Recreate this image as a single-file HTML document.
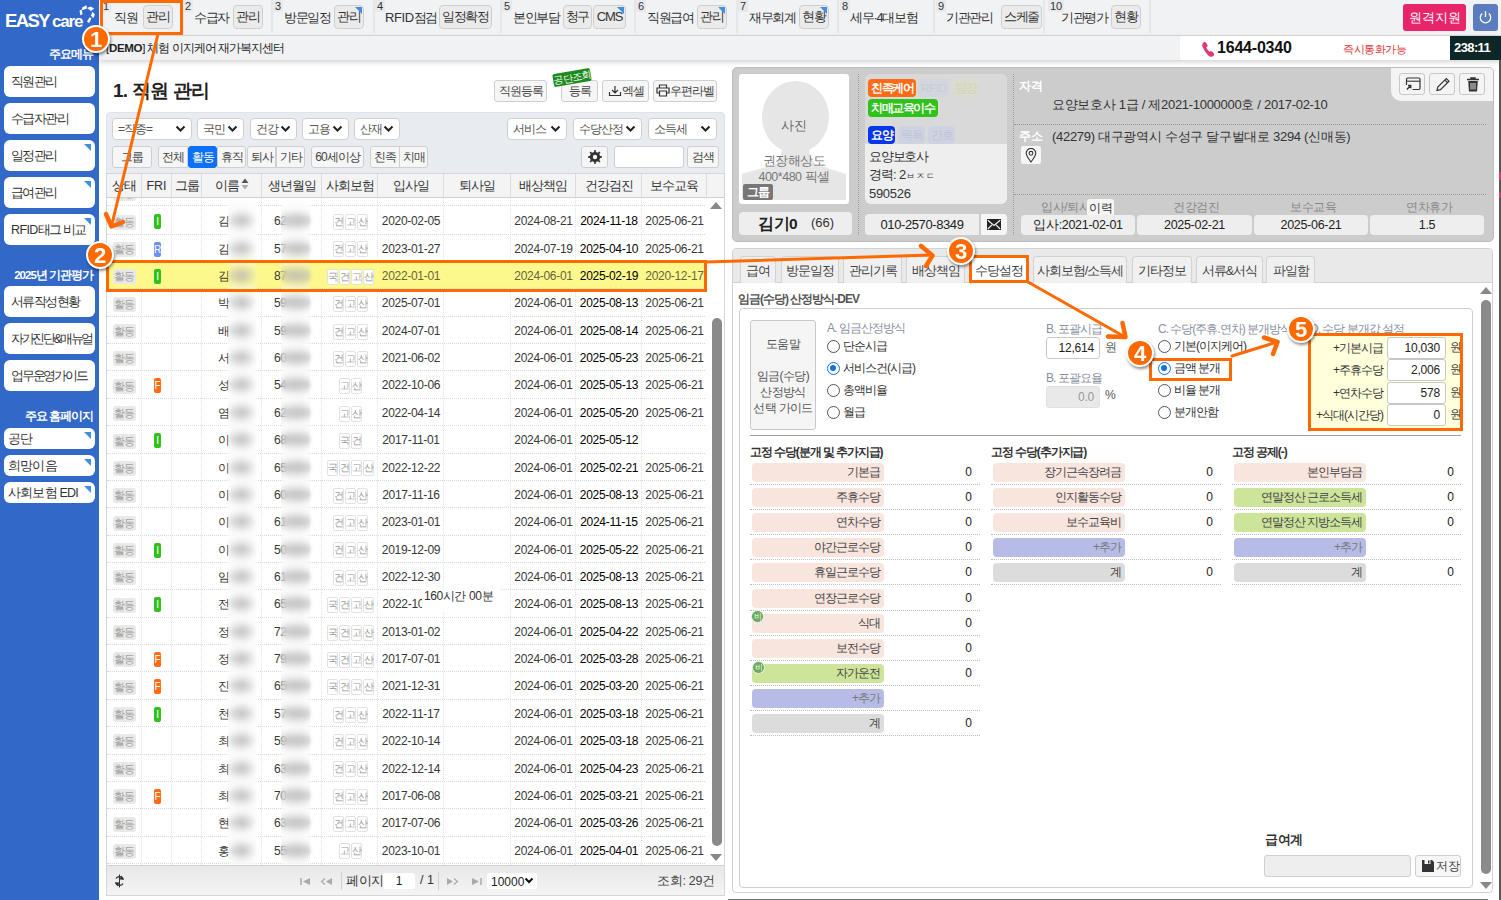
<!DOCTYPE html>
<html><head><meta charset="utf-8">
<style>
*{box-sizing:border-box;margin:0;padding:0}
html,body{width:1501px;height:900px;overflow:hidden;background:#fff}
body{position:relative;font-family:"Liberation Sans",sans-serif;font-size:12px;color:#333}
.a{position:absolute}
#sb{left:0;top:0;width:99px;height:900px;background:#3268c8}
.sbb{position:absolute;left:4px;width:91px;height:31px;background:#fff;border-radius:6px;font-size:12.5px;color:#333;padding-left:7px;line-height:33px;letter-spacing:-1.6px;white-space:nowrap}
.sbs{height:21px;line-height:22px;padding-left:4px;letter-spacing:-0.8px}
.tri{position:absolute;right:4px;top:4px;width:0;height:0;border-top:7px solid #3d8fe0;border-left:7px solid transparent}
.sbh{position:absolute;right:6px;color:#fff;font-weight:bold;font-size:11.5px;text-align:right;white-space:nowrap;letter-spacing:-1px}
#nav{left:99px;top:0;width:1402px;height:36px;background:#f1f2f4;border-bottom:1px solid #dcdcdc}
#bar2{left:99px;top:36px;width:1402px;height:24px;background:#f1f2f4;box-shadow:0 2px 5px rgba(0,0,0,0.18)}
.tab{position:absolute;top:0;height:35px}
.tsep{position:absolute;top:0;width:2px;height:33px;background:#e6e7ea}
.tnum{position:absolute;top:0;font-size:11px;color:#333;background:#e8e9ec;padding:0 2px;line-height:12px;height:12px}
.tlbl{position:absolute;top:9px;font-size:13px;color:#333;white-space:nowrap;letter-spacing:-1.3px}
.tbtn{position:absolute;top:5px;height:24px;background:#ebebeb;border:1px solid #cfcfcf;border-radius:4px;font-size:13px;color:#333;text-align:center;line-height:22px;white-space:nowrap;letter-spacing:-1.2px}

.btn{position:absolute;height:22px;background:#f6f6f6;border:1px solid #cfcfcf;border-radius:3px;font-size:12px;color:#444;text-align:center;line-height:20px;white-space:nowrap;letter-spacing:-1px}
.sel{position:absolute;top:118px;height:22px;background:#fff;border:1px solid #cfcfcf;border-radius:4px;font-size:12px;color:#555;line-height:20px;padding-left:5px;white-space:nowrap;letter-spacing:-1px}
.sel svg{position:absolute;right:5px;top:6px}
.fb{position:absolute;top:146px;height:22px;background:#f6f6f6;border:1px solid #cfcfcf;font-size:12px;color:#444;text-align:center;line-height:20px;white-space:nowrap;letter-spacing:-1px}

.th{position:absolute;top:0;height:24px;line-height:24px;text-align:center;font-size:12.5px;color:#333;border-right:1px solid #dcdcdc;white-space:nowrap;letter-spacing:-1px}
.tr{position:absolute;left:0;width:600px;height:27.4px;border-bottom:1px dotted #d9d9d9}
.td{position:absolute;top:1px;height:27px;line-height:27px;text-align:center;font-size:12px;letter-spacing:-0.3px;color:#383838;white-space:nowrap}
.st{display:inline-block;background:#e9e9e9;color:#a3a3a3;font-size:11px;line-height:15px;padding:0 1px;border-radius:3px;vertical-align:middle;letter-spacing:-0.6px}
.fr{position:absolute;left:12px;top:6px;width:7px;height:15px;border-radius:2px;color:#fff;font-size:10px;line-height:15px;text-align:center}
.bl{position:absolute;top:7px;height:11px;background:#a9a9a9;border-radius:6px;filter:blur(2.5px)}
.ins{display:inline-block;vertical-align:middle;line-height:0}
.ins i{display:inline-block;font-style:normal;width:11px;height:16px;border:1px solid #e2e2e2;border-radius:2px;font-size:10px;line-height:14px;color:#999;margin:0 0.5px;text-align:center;background:#fff;letter-spacing:0}

.bdg{position:absolute;height:18px;line-height:18px;font-size:11.5px;color:#fff;font-weight:bold;padding:0 3px;border-radius:4px;white-space:nowrap;letter-spacing:-1.4px}
.vbox{position:absolute;top:215px;height:20px;background:#eeeeee;border-radius:4px;font-size:12.5px;color:#222;text-align:center;line-height:20px;letter-spacing:-0.3px}
.lbl2{position:absolute;top:199px;font-size:12px;color:#888;white-space:nowrap;letter-spacing:-0.4px}
.ibtn{position:absolute;top:73px;width:26px;height:22px;background:#f4f4f4;border:1px solid #c8c8c8;border-radius:3px}
.ibtn svg{position:absolute;left:5px;top:3px}

.rt{position:absolute;top:256px;height:27px;background:#f0f0f0;border:1px solid #d2d2d2;border-bottom:none;border-radius:4px 4px 0 0;font-size:12.5px;color:#444;text-align:center;line-height:28px;white-space:nowrap;letter-spacing:-1px}
.rad{position:absolute;width:13px;height:13px;border:1px solid #555;border-radius:50%;background:#fff}
.rad.on{border:1.5px solid #1170e8}
.rad.on:after{content:"";position:absolute;left:2px;top:2px;width:6px;height:6px;border-radius:50%;background:#1170e8}
.rl{position:absolute;font-size:12px;color:#333;white-space:nowrap;letter-spacing:-1px}
.gl{position:absolute;font-size:12px;color:#8890a0;white-space:nowrap;letter-spacing:-1px}
.inp{position:absolute;height:22px;background:#fff;border:1px solid #c8c8c8;border-radius:3px;font-size:12px;color:#222;text-align:right;line-height:21px;padding-right:5px;letter-spacing:-0.2px}
.sh{position:absolute;top:444px;font-size:12px;font-weight:bold;color:#333;white-space:nowrap;letter-spacing:-1.1px}
.lb{position:absolute;height:19px;border-radius:4px;font-size:12px;color:#444;text-align:right;line-height:19px;padding-right:4px;white-space:nowrap;letter-spacing:-1px}
.lv{position:absolute;font-size:12px;color:#222;line-height:19px;text-align:right;width:30px}
.dl{position:absolute;height:0;border-top:1px dotted #bdbdbd}
.bi{position:absolute;width:13px;height:13px;border-radius:50%;background:#6aa85c;color:#fff;font-size:7.5px;line-height:12px;text-align:center;border:1px solid #eef5ea}

.obox{position:absolute;border:3px solid #ff6a00}
.circ{position:absolute;width:28px;height:28px;border-radius:50%;background:#ff6a00;border:2px solid #fff;box-shadow:1px 2px 3px rgba(0,0,0,0.45);color:#fff;font-weight:bold;font-size:22px;line-height:25px;text-align:center}
</style></head><body>
<div id="sb" class="a">
<div class="a" style="left:5px;top:11px;color:#fff;font-weight:bold;font-size:18.5px;letter-spacing:-1.6px;white-space:nowrap;line-height:20px">EASY<span style="margin-left:3px;font-size:17px;letter-spacing:-1.2px">care</span></div>
<svg class="a" style="left:77px;top:4px" width="20" height="21" viewBox="0 0 20 21"><g fill="#fff">
<path d="M2.5 6.8L4.6 5.2 5.6 10 3.5 11.5z"/><path d="M5.3 3.2L9.5 1.2 9.9 4.4 5.1 6.2z"/><path d="M10.2 4L13.5 2.5 17.2 4.6 14 6.9z"/><path d="M15.4 7.8L17.9 10.5 16.3 14.2 13.9 11.6z"/><path d="M12.6 13.2L14.5 14.5 12.1 18.9 10 17.6z"/></g></svg>
<div class="sbh" style="top:47px">주요메뉴</div>
<div class="sbb" style="top:66px">직원관리</div>
<div class="sbb" style="top:103px">수급자관리</div>
<div class="sbb" style="top:140px">일정관리<i class="tri"></i></div>
<div class="sbb" style="top:177px">급여관리<i class="tri"></i></div>
<div class="sbb" style="top:214px;letter-spacing:-1.5px"><span style="letter-spacing:-0.6px">RFID</span>태그 비교<i class="tri"></i></div>
<div class="sbh" style="top:268px">2025년 기관평가</div>
<div class="sbb" style="top:286px">서류작성현황</div>
<div class="sbb" style="top:323px;letter-spacing:-2.3px">자가진단&amp;매뉴얼</div>
<div class="sbb" style="top:360px;letter-spacing:-2.2px">업무운영가이드</div>
<div class="sbh" style="top:409px">주요 홈페이지</div>
<div class="sbb sbs" style="top:428px">공단<i class="tri"></i></div>
<div class="sbb sbs" style="top:455px">희망이음<i class="tri"></i></div>
<div class="sbb sbs" style="top:482px">사회보험 EDI<i class="tri"></i></div>
</div>
<div id="nav" class="a"></div>
<div class="a" style="left:0;top:0;width:1501px;height:36px">
<div class="tnum" style="left:101px">1</div>
<div class="tlbl" style="left:114px">직원</div>
<div class="tbtn" style="left:143px;width:30px">관리</div>
<div class="tsep" style="left:182px"></div>
<div class="tnum" style="left:183px">2</div>
<div class="tlbl" style="left:194px">수급자</div>
<div class="tbtn" style="left:233px;width:30px">관리</div>
<div class="tsep" style="left:271px"></div>
<div class="tnum" style="left:273px">3</div>
<div class="tlbl" style="left:284px">방문일정</div>
<div class="tbtn" style="left:334px;width:30px">관리<i class="tri" style="right:1px;top:1px"></i></div>
<div class="tsep" style="left:373px"></div>
<div class="tnum" style="left:375px">4</div>
<div class="tlbl" style="left:385px"><span style="letter-spacing:-0.4px">RFID</span>점검</div>
<div class="tbtn" style="left:439px;width:53px">일정확정</div>
<div class="tsep" style="left:500px"></div>
<div class="tnum" style="left:502px">5</div>
<div class="tlbl" style="left:513px">본인부담</div>
<div class="tbtn" style="left:563px;width:29px">청구</div>
<div class="tbtn" style="left:593px;width:33px">CMS<i class="tri" style="right:1px;top:1px"></i></div>
<div class="tsep" style="left:634px"></div>
<div class="tnum" style="left:636px">6</div>
<div class="tlbl" style="left:647px">직원급여</div>
<div class="tbtn" style="left:697px;width:30px">관리<i class="tri" style="right:1px;top:1px"></i></div>
<div class="tsep" style="left:736px"></div>
<div class="tnum" style="left:738px">7</div>
<div class="tlbl" style="left:749px">재무회계</div>
<div class="tbtn" style="left:799px;width:30px">현황<i class="tri" style="right:1px;top:1px"></i></div>
<div class="tsep" style="left:837px"></div>
<div class="tnum" style="left:840px">8</div>
<div class="tlbl" style="left:850px">세무·4대보험</div>
<div class="tsep" style="left:933px"></div>
<div class="tnum" style="left:936px">9</div>
<div class="tlbl" style="left:946px">기관관리</div>
<div class="tbtn" style="left:1001px;width:41px">스케줄</div>
<div class="tsep" style="left:1043px"></div>
<div class="tnum" style="left:1048px">10</div>
<div class="tlbl" style="left:1061px">기관평가</div>
<div class="tbtn" style="left:1111px;width:30px">현황</div>
<div class="tsep" style="left:1149px"></div>
<div class="a" style="left:1403px;top:4px;width:63px;height:27px;background:#e8246b;border-radius:3px;color:#fff;font-size:13px;text-align:center;line-height:27px">원격지원</div>
<div class="a" style="left:1473px;top:4px;width:25px;height:27px;background:#5b7dbf;border-radius:3px"><svg class="a" style="left:5px;top:6px" width="15" height="15" viewBox="0 0 15 15"><path d="M4.2 3.6A5.2 5.2 0 1 0 10.8 3.6" fill="none" stroke="#fff" stroke-width="1.3"/><path d="M7.5 1.2V7" stroke="#fff" stroke-width="1.3"/></svg></div>
</div>
<div id="bar2" class="a"></div>
<div class="a" style="left:106px;top:41px;font-size:11.5px;color:#222;white-space:nowrap;letter-spacing:-1px"><span style="letter-spacing:-0.3px">[<b>DEMO</b>]</span> 체험 이지케어 재가복지센터</div>
<div class="a" style="left:1180px;top:36px;width:275px;height:24px;background:#fff;border-radius:4px 0 0 4px"></div>
<svg class="a" style="left:1201px;top:41px" width="15" height="16" viewBox="0 0 15 16"><path d="M2.5 1.5c1-0.8 2-0.6 2.6 0.3l1.3 2.2c0.4 0.7 0.2 1.4-0.4 1.8l-0.8 0.5c0.6 1.8 1.8 3.4 3.4 4.5l0.8-0.5c0.6-0.4 1.3-0.3 1.8 0.3l1.6 2c0.6 0.8 0.4 1.8-0.5 2.4-1.5 1-3.4 0.8-5-0.6C5 12.3 2.6 8.8 1.4 5.3 0.9 3.8 1.3 2.4 2.5 1.5z" fill="#e0357a"/></svg>
<div class="a" style="left:1217px;top:39px;font-size:16px;font-weight:bold;color:#111;white-space:nowrap;letter-spacing:-0.2px">1644-0340</div>
<div class="a" style="left:1343px;top:42px;font-size:11px;color:#d33;white-space:nowrap;letter-spacing:-0.5px">즉시통화가능</div>
<div class="a" style="left:1450px;top:36px;width:51px;height:24px;background:#0d2626;color:#fff;font-size:13px;font-weight:bold;line-height:24px;padding-left:4px;letter-spacing:-0.6px">238:11</div>


<div class="a" style="left:113px;top:78px;font-size:19px;font-weight:bold;color:#222;white-space:nowrap;letter-spacing:-0.8px">1. 직원 관리</div>
<div class="btn" style="left:494px;top:80px;width:53px;height:22px">직원등록</div>
<div class="btn" style="left:561px;top:80px;width:37px;height:22px">등록</div>
<div class="a" style="left:553px;top:71px;width:38px;height:13px;background:#1e8a1e;color:#fff;font-size:10px;line-height:13px;text-align:center;transform:rotate(-10deg);border-radius:2px;letter-spacing:-0.8px">공단조회</div>
<div class="btn" style="left:602px;top:80px;width:47px;height:22px"><svg style="vertical-align:-2px" width="14" height="12" viewBox="0 0 14 12"><path d="M7 1v7M4 5l3 3 3-3M1.5 7v3.5h11V7" fill="none" stroke="#333" stroke-width="1.2"/></svg>엑셀</div>
<div class="btn" style="left:653px;top:80px;width:64px;height:22px"><svg style="vertical-align:-2px" width="14" height="13" viewBox="0 0 14 13"><path d="M3.5 4V1h7v3M3.5 9H1V4h12v5h-2.5M3.5 7h7v5h-7z" fill="none" stroke="#333" stroke-width="1.2"/></svg>우편라벨</div>
<div class="a" style="left:106px;top:112px;width:619px;height:62px;background:#e8ebef;border-radius:4px 4px 0 0;border:1px solid #dfe2e6"></div>
<div class="sel" style="left:112px;width:80px">=직종=<svg width="11" height="8" viewBox="0 0 11 8"><path d="M1.5 1.5L5.5 5.5 9.5 1.5" fill="none" stroke="#222" stroke-width="2"/></svg></div><div class="sel" style="left:197px;width:47px">국민<svg width="11" height="8" viewBox="0 0 11 8"><path d="M1.5 1.5L5.5 5.5 9.5 1.5" fill="none" stroke="#222" stroke-width="2"/></svg></div><div class="sel" style="left:250px;width:47px">건강<svg width="11" height="8" viewBox="0 0 11 8"><path d="M1.5 1.5L5.5 5.5 9.5 1.5" fill="none" stroke="#222" stroke-width="2"/></svg></div><div class="sel" style="left:302px;width:47px">고용<svg width="11" height="8" viewBox="0 0 11 8"><path d="M1.5 1.5L5.5 5.5 9.5 1.5" fill="none" stroke="#222" stroke-width="2"/></svg></div><div class="sel" style="left:354px;width:46px">산재<svg width="11" height="8" viewBox="0 0 11 8"><path d="M1.5 1.5L5.5 5.5 9.5 1.5" fill="none" stroke="#222" stroke-width="2"/></svg></div><div class="sel" style="left:507px;width:60px">서비스<svg width="11" height="8" viewBox="0 0 11 8"><path d="M1.5 1.5L5.5 5.5 9.5 1.5" fill="none" stroke="#222" stroke-width="2"/></svg></div><div class="sel" style="left:573px;width:69px">수당산정<svg width="11" height="8" viewBox="0 0 11 8"><path d="M1.5 1.5L5.5 5.5 9.5 1.5" fill="none" stroke="#222" stroke-width="2"/></svg></div><div class="sel" style="left:648px;width:69px">소득세<svg width="11" height="8" viewBox="0 0 11 8"><path d="M1.5 1.5L5.5 5.5 9.5 1.5" fill="none" stroke="#222" stroke-width="2"/></svg></div>
<div class="fb" style="left:112px;width:40px;border-radius:3px">그룹</div>
<div class="fb" style="left:158px;width:30px;border-radius:3px 0 0 3px">전체</div>
<div class="fb" style="left:188px;width:29px;background:#0b6ff7;border-color:#0b6ff7;color:#fff;border-radius:3px">활동</div>
<div class="fb" style="left:217px;width:29px;border-radius:0 3px 3px 0">휴직</div>
<div class="fb" style="left:247px;width:29px;border-radius:3px 0 0 3px">퇴사</div>
<div class="fb" style="left:276px;width:29px;border-radius:0 3px 3px 0">기타</div>
<div class="fb" style="left:311px;width:53px;border-radius:3px">60세이상</div>
<div class="fb" style="left:370px;width:30px;border-radius:3px 0 0 3px">친족</div>
<div class="fb" style="left:399px;width:29px;border-radius:0 3px 3px 0">치매</div>
<div class="fb" style="left:581px;width:27px;border-radius:3px"><svg style="position:absolute;left:5px;top:2px" width="16" height="16" viewBox="0 0 16 16"><path d="M13.12 7.11 L14.96 7.29 L14.96 8.71 L13.12 8.89 L12.25 10.99 L13.43 12.42 L12.42 13.43 L10.99 12.25 L8.89 13.12 L8.71 14.96 L7.29 14.96 L7.11 13.12 L5.01 12.25 L3.58 13.43 L2.57 12.42 L3.75 10.99 L2.88 8.89 L1.04 8.71 L1.04 7.29 L2.88 7.11 L3.75 5.01 L2.57 3.58 L3.58 2.57 L5.01 3.75 L7.11 2.88 L7.29 1.04 L8.71 1.04 L8.89 2.88 L10.99 3.75 L12.42 2.57 L13.43 3.58 L12.25 5.01Z" fill="#333"/><circle cx="8" cy="8" r="2.2" fill="#f6f6f6"/></svg></div>
<div class="a" style="left:614px;top:146px;width:70px;height:22px;background:#fff;border:1px solid #cfcfcf;border-radius:3px"></div>
<div class="fb" style="left:687px;width:32px;border-radius:3px">검색</div>


<div class="a" style="left:106px;top:173px;width:619px;height:723px;border:1px solid #d6d6d6;background:#fff"></div>
<div class="a" style="left:107px;top:174px;width:617px;height:24px;background:#f4f4f4;border-bottom:1px solid #cfcfcf"><div class="th" style="left:0px;width:35px">상태</div><div class="th" style="left:35px;width:30px;letter-spacing:0">FRI</div><div class="th" style="left:65px;width:30px">그룹</div><div class="th" style="left:95px;width:60px">이름<svg style="vertical-align:0px;margin-left:2px" width="8" height="12" viewBox="0 0 8 12"><path d="M4 0.5L7.5 5H0.5z" fill="#555"/><path d="M4 11.5L7.5 7H0.5z" fill="#aaa"/></svg></div><div class="th" style="left:155px;width:60px">생년월일</div><div class="th" style="left:215px;width:56px">사회보험</div><div class="th" style="left:271px;width:66px">입사일</div><div class="th" style="left:337px;width:67px">퇴사일</div><div class="th" style="left:404px;width:65px">배상책임</div><div class="th" style="left:469px;width:66px">건강검진</div><div class="th" style="left:535px;width:65px">보수교육</div></div>
<div class="a" style="left:107px;top:198px;width:599px;height:667px;overflow:hidden">
<div class="a" style="left:34px;top:0;width:0;height:667px;border-left:1px dotted #e3e3e3"></div><div class="a" style="left:64px;top:0;width:0;height:667px;border-left:1px dotted #e3e3e3"></div><div class="a" style="left:94px;top:0;width:0;height:667px;border-left:1px dotted #e3e3e3"></div><div class="a" style="left:154px;top:0;width:0;height:667px;border-left:1px dotted #e3e3e3"></div><div class="a" style="left:214px;top:0;width:0;height:667px;border-left:1px dotted #e3e3e3"></div><div class="a" style="left:270px;top:0;width:0;height:667px;border-left:1px dotted #e3e3e3"></div><div class="a" style="left:336px;top:0;width:0;height:667px;border-left:1px dotted #e3e3e3"></div><div class="a" style="left:403px;top:0;width:0;height:667px;border-left:1px dotted #e3e3e3"></div><div class="a" style="left:468px;top:0;width:0;height:667px;border-left:1px dotted #e3e3e3"></div><div class="a" style="left:534px;top:0;width:0;height:667px;border-left:1px dotted #e3e3e3"></div>
<div class="tr" style="top:-19px"><div class="td" style="left:0;width:35px"><span class="st">활동</span></div></div><div class="tr" style="top:9.30px;"><div class="td" style="left:0px;width:35px;"><span class="st">활동</span></div><div class="td" style="left:35px;width:30px;"><span class="fr" style="background:#2fc21b">I</span></div><div class="td" style="left:65px;width:30px;"></div><div class="td" style="left:95px;width:60px;letter-spacing:-0.5px"><span style="position:absolute;left:16px;top:0">김</span><span class="bl" style="left:30px;width:19px"></span></div><div class="td" style="left:155px;width:60px;"><span style="position:absolute;left:12px;top:0">62</span><span class="bl" style="left:23px;width:24px"></span></div><div class="td" style="left:215px;width:56px;"><span class="ins"><i>건</i><i>고</i><i>산</i></span></div><div class="td" style="left:271px;width:66px;">2020-02-05</div><div class="td" style="left:337px;width:67px;"></div><div class="td" style="left:404px;width:65px;">2024-08-21</div><div class="td" style="left:469px;width:66px;color:#000">2024-11-18</div><div class="td" style="left:535px;width:65px;">2025-06-21</div></div><div class="tr" style="top:36.66px;"><div class="td" style="left:0px;width:35px;"><span class="st">활동</span></div><div class="td" style="left:35px;width:30px;"><span class="fr" style="background:#6f8ff5">R</span></div><div class="td" style="left:65px;width:30px;"></div><div class="td" style="left:95px;width:60px;letter-spacing:-0.5px"><span style="position:absolute;left:16px;top:0">김</span><span class="bl" style="left:30px;width:19px"></span></div><div class="td" style="left:155px;width:60px;"><span style="position:absolute;left:12px;top:0">57</span><span class="bl" style="left:23px;width:24px"></span></div><div class="td" style="left:215px;width:56px;"><span class="ins"><i>건</i><i>고</i><i>산</i></span></div><div class="td" style="left:271px;width:66px;">2023-01-27</div><div class="td" style="left:337px;width:67px;"></div><div class="td" style="left:404px;width:65px;">2024-07-19</div><div class="td" style="left:469px;width:66px;color:#000">2025-04-10</div><div class="td" style="left:535px;width:65px;">2025-06-21</div></div><div class="tr" style="top:64.02px;background:#fdf88b;"><div class="td" style="left:0px;width:35px;"><span class="st">활동</span></div><div class="td" style="left:35px;width:30px;"><span class="fr" style="background:#2fc21b">I</span></div><div class="td" style="left:65px;width:30px;"></div><div class="td" style="left:95px;width:60px;letter-spacing:-0.5px"><span style="position:absolute;left:16px;top:0">김</span><span class="bl" style="left:30px;width:19px"></span></div><div class="td" style="left:155px;width:60px;"><span style="position:absolute;left:12px;top:0">87</span><span class="bl" style="left:23px;width:24px"></span></div><div class="td" style="left:215px;width:56px;"><span class="ins"><i>국</i><i>건</i><i>고</i><i>산</i></span></div><div class="td" style="left:271px;width:66px;"><span style="color:#6a6440">2022-01-01</span></div><div class="td" style="left:337px;width:67px;"></div><div class="td" style="left:404px;width:65px;"><span style="color:#6a6440">2024-06-01</span></div><div class="td" style="left:469px;width:66px;color:#000">2025-02-19</div><div class="td" style="left:535px;width:65px;"><span style="color:#6a6440">2020-12-17</span></div></div><div class="tr" style="top:91.38px;"><div class="td" style="left:0px;width:35px;"><span class="st">활동</span></div><div class="td" style="left:35px;width:30px;"></div><div class="td" style="left:65px;width:30px;"></div><div class="td" style="left:95px;width:60px;letter-spacing:-0.5px"><span style="position:absolute;left:16px;top:0">박</span><span class="bl" style="left:30px;width:19px"></span></div><div class="td" style="left:155px;width:60px;"><span style="position:absolute;left:12px;top:0">59</span><span class="bl" style="left:23px;width:24px"></span></div><div class="td" style="left:215px;width:56px;"><span class="ins"><i>건</i><i>고</i><i>산</i></span></div><div class="td" style="left:271px;width:66px;">2025-07-01</div><div class="td" style="left:337px;width:67px;"></div><div class="td" style="left:404px;width:65px;">2024-06-01</div><div class="td" style="left:469px;width:66px;color:#000">2025-08-13</div><div class="td" style="left:535px;width:65px;">2025-06-21</div></div><div class="tr" style="top:118.74px;"><div class="td" style="left:0px;width:35px;"><span class="st">활동</span></div><div class="td" style="left:35px;width:30px;"></div><div class="td" style="left:65px;width:30px;"></div><div class="td" style="left:95px;width:60px;letter-spacing:-0.5px"><span style="position:absolute;left:16px;top:0">배</span><span class="bl" style="left:30px;width:19px"></span></div><div class="td" style="left:155px;width:60px;"><span style="position:absolute;left:12px;top:0">59</span><span class="bl" style="left:23px;width:24px"></span></div><div class="td" style="left:215px;width:56px;"><span class="ins"><i>건</i><i>고</i><i>산</i></span></div><div class="td" style="left:271px;width:66px;">2024-07-01</div><div class="td" style="left:337px;width:67px;"></div><div class="td" style="left:404px;width:65px;">2024-06-01</div><div class="td" style="left:469px;width:66px;color:#000">2025-08-14</div><div class="td" style="left:535px;width:65px;">2025-06-21</div></div><div class="tr" style="top:146.10px;"><div class="td" style="left:0px;width:35px;"><span class="st">활동</span></div><div class="td" style="left:35px;width:30px;"></div><div class="td" style="left:65px;width:30px;"></div><div class="td" style="left:95px;width:60px;letter-spacing:-0.5px"><span style="position:absolute;left:16px;top:0">서</span><span class="bl" style="left:30px;width:19px"></span></div><div class="td" style="left:155px;width:60px;"><span style="position:absolute;left:12px;top:0">60</span><span class="bl" style="left:23px;width:24px"></span></div><div class="td" style="left:215px;width:56px;"><span class="ins"><i>건</i><i>고</i><i>산</i></span></div><div class="td" style="left:271px;width:66px;">2021-06-02</div><div class="td" style="left:337px;width:67px;"></div><div class="td" style="left:404px;width:65px;">2024-06-01</div><div class="td" style="left:469px;width:66px;color:#000">2025-05-23</div><div class="td" style="left:535px;width:65px;">2025-06-21</div></div><div class="tr" style="top:173.46px;"><div class="td" style="left:0px;width:35px;"><span class="st">활동</span></div><div class="td" style="left:35px;width:30px;"><span class="fr" style="background:#ff6a13">F</span></div><div class="td" style="left:65px;width:30px;"></div><div class="td" style="left:95px;width:60px;letter-spacing:-0.5px"><span style="position:absolute;left:16px;top:0">성</span><span class="bl" style="left:30px;width:19px"></span></div><div class="td" style="left:155px;width:60px;"><span style="position:absolute;left:12px;top:0">54</span><span class="bl" style="left:23px;width:24px"></span></div><div class="td" style="left:215px;width:56px;"><span class="ins"><i>고</i><i>산</i></span></div><div class="td" style="left:271px;width:66px;">2022-10-06</div><div class="td" style="left:337px;width:67px;"></div><div class="td" style="left:404px;width:65px;">2024-06-01</div><div class="td" style="left:469px;width:66px;color:#000">2025-05-13</div><div class="td" style="left:535px;width:65px;">2025-06-21</div></div><div class="tr" style="top:200.82px;"><div class="td" style="left:0px;width:35px;"><span class="st">활동</span></div><div class="td" style="left:35px;width:30px;"></div><div class="td" style="left:65px;width:30px;"></div><div class="td" style="left:95px;width:60px;letter-spacing:-0.5px"><span style="position:absolute;left:16px;top:0">염</span><span class="bl" style="left:30px;width:19px"></span></div><div class="td" style="left:155px;width:60px;"><span style="position:absolute;left:12px;top:0">62</span><span class="bl" style="left:23px;width:24px"></span></div><div class="td" style="left:215px;width:56px;"><span class="ins"><i>고</i><i>산</i></span></div><div class="td" style="left:271px;width:66px;">2022-04-14</div><div class="td" style="left:337px;width:67px;"></div><div class="td" style="left:404px;width:65px;">2024-06-01</div><div class="td" style="left:469px;width:66px;color:#000">2025-05-20</div><div class="td" style="left:535px;width:65px;">2025-06-21</div></div><div class="tr" style="top:228.18px;"><div class="td" style="left:0px;width:35px;"><span class="st">활동</span></div><div class="td" style="left:35px;width:30px;"><span class="fr" style="background:#2fc21b">I</span></div><div class="td" style="left:65px;width:30px;"></div><div class="td" style="left:95px;width:60px;letter-spacing:-0.5px"><span style="position:absolute;left:16px;top:0">이</span><span class="bl" style="left:30px;width:19px"></span></div><div class="td" style="left:155px;width:60px;"><span style="position:absolute;left:12px;top:0">68</span><span class="bl" style="left:23px;width:24px"></span></div><div class="td" style="left:215px;width:56px;"><span class="ins"><i>국</i><i>건</i></span></div><div class="td" style="left:271px;width:66px;">2017-11-01</div><div class="td" style="left:337px;width:67px;"></div><div class="td" style="left:404px;width:65px;">2024-06-01</div><div class="td" style="left:469px;width:66px;color:#000">2025-05-12</div><div class="td" style="left:535px;width:65px;"></div></div><div class="tr" style="top:255.54px;"><div class="td" style="left:0px;width:35px;"><span class="st">활동</span></div><div class="td" style="left:35px;width:30px;"></div><div class="td" style="left:65px;width:30px;"></div><div class="td" style="left:95px;width:60px;letter-spacing:-0.5px"><span style="position:absolute;left:16px;top:0">이</span><span class="bl" style="left:30px;width:19px"></span></div><div class="td" style="left:155px;width:60px;"><span style="position:absolute;left:12px;top:0">65</span><span class="bl" style="left:23px;width:24px"></span></div><div class="td" style="left:215px;width:56px;"><span class="ins"><i>국</i><i>건</i><i>고</i><i>산</i></span></div><div class="td" style="left:271px;width:66px;">2022-12-22</div><div class="td" style="left:337px;width:67px;"></div><div class="td" style="left:404px;width:65px;">2024-06-01</div><div class="td" style="left:469px;width:66px;color:#000">2025-02-21</div><div class="td" style="left:535px;width:65px;">2025-06-21</div></div><div class="tr" style="top:282.90px;"><div class="td" style="left:0px;width:35px;"><span class="st">활동</span></div><div class="td" style="left:35px;width:30px;"></div><div class="td" style="left:65px;width:30px;"></div><div class="td" style="left:95px;width:60px;letter-spacing:-0.5px"><span style="position:absolute;left:16px;top:0">이</span><span class="bl" style="left:30px;width:19px"></span></div><div class="td" style="left:155px;width:60px;"><span style="position:absolute;left:12px;top:0">60</span><span class="bl" style="left:23px;width:24px"></span></div><div class="td" style="left:215px;width:56px;"><span class="ins"><i>건</i><i>고</i><i>산</i></span></div><div class="td" style="left:271px;width:66px;">2017-11-16</div><div class="td" style="left:337px;width:67px;"></div><div class="td" style="left:404px;width:65px;">2024-06-01</div><div class="td" style="left:469px;width:66px;color:#000">2025-08-13</div><div class="td" style="left:535px;width:65px;">2025-06-21</div></div><div class="tr" style="top:310.26px;"><div class="td" style="left:0px;width:35px;"><span class="st">활동</span></div><div class="td" style="left:35px;width:30px;"></div><div class="td" style="left:65px;width:30px;"></div><div class="td" style="left:95px;width:60px;letter-spacing:-0.5px"><span style="position:absolute;left:16px;top:0">이</span><span class="bl" style="left:30px;width:19px"></span></div><div class="td" style="left:155px;width:60px;"><span style="position:absolute;left:12px;top:0">61</span><span class="bl" style="left:23px;width:24px"></span></div><div class="td" style="left:215px;width:56px;"><span class="ins"><i>건</i><i>고</i><i>산</i></span></div><div class="td" style="left:271px;width:66px;">2023-01-01</div><div class="td" style="left:337px;width:67px;"></div><div class="td" style="left:404px;width:65px;">2024-06-01</div><div class="td" style="left:469px;width:66px;color:#000">2024-11-15</div><div class="td" style="left:535px;width:65px;">2025-06-21</div></div><div class="tr" style="top:337.62px;"><div class="td" style="left:0px;width:35px;"><span class="st">활동</span></div><div class="td" style="left:35px;width:30px;"><span class="fr" style="background:#2fc21b">I</span></div><div class="td" style="left:65px;width:30px;"></div><div class="td" style="left:95px;width:60px;letter-spacing:-0.5px"><span style="position:absolute;left:16px;top:0">이</span><span class="bl" style="left:30px;width:19px"></span></div><div class="td" style="left:155px;width:60px;"><span style="position:absolute;left:12px;top:0">50</span><span class="bl" style="left:23px;width:24px"></span></div><div class="td" style="left:215px;width:56px;"><span class="ins"><i>건</i><i>고</i><i>산</i></span></div><div class="td" style="left:271px;width:66px;">2019-12-09</div><div class="td" style="left:337px;width:67px;"></div><div class="td" style="left:404px;width:65px;">2024-06-01</div><div class="td" style="left:469px;width:66px;color:#000">2025-05-22</div><div class="td" style="left:535px;width:65px;">2025-06-21</div></div><div class="tr" style="top:364.98px;"><div class="td" style="left:0px;width:35px;"><span class="st">활동</span></div><div class="td" style="left:35px;width:30px;"></div><div class="td" style="left:65px;width:30px;"></div><div class="td" style="left:95px;width:60px;letter-spacing:-0.5px"><span style="position:absolute;left:16px;top:0">임</span><span class="bl" style="left:30px;width:19px"></span></div><div class="td" style="left:155px;width:60px;"><span style="position:absolute;left:12px;top:0">61</span><span class="bl" style="left:23px;width:24px"></span></div><div class="td" style="left:215px;width:56px;"><span class="ins"><i>건</i><i>고</i><i>산</i></span></div><div class="td" style="left:271px;width:66px;">2022-12-30</div><div class="td" style="left:337px;width:67px;"></div><div class="td" style="left:404px;width:65px;">2024-06-01</div><div class="td" style="left:469px;width:66px;color:#000">2025-08-13</div><div class="td" style="left:535px;width:65px;">2025-06-21</div></div><div class="tr" style="top:392.34px;"><div class="td" style="left:0px;width:35px;"><span class="st">활동</span></div><div class="td" style="left:35px;width:30px;"><span class="fr" style="background:#2fc21b">I</span></div><div class="td" style="left:65px;width:30px;"></div><div class="td" style="left:95px;width:60px;letter-spacing:-0.5px"><span style="position:absolute;left:16px;top:0">전</span><span class="bl" style="left:30px;width:19px"></span></div><div class="td" style="left:155px;width:60px;"><span style="position:absolute;left:12px;top:0">65</span><span class="bl" style="left:23px;width:24px"></span></div><div class="td" style="left:215px;width:56px;"><span class="ins"><i>국</i><i>건</i><i>고</i><i>산</i></span></div><div class="td" style="left:271px;width:66px;">2022-10-11</div><div class="td" style="left:337px;width:67px;"></div><div class="td" style="left:404px;width:65px;">2024-06-01</div><div class="td" style="left:469px;width:66px;color:#000">2025-08-13</div><div class="td" style="left:535px;width:65px;">2025-06-21</div></div><div class="tr" style="top:419.70px;"><div class="td" style="left:0px;width:35px;"><span class="st">활동</span></div><div class="td" style="left:35px;width:30px;"></div><div class="td" style="left:65px;width:30px;"></div><div class="td" style="left:95px;width:60px;letter-spacing:-0.5px"><span style="position:absolute;left:16px;top:0">정</span><span class="bl" style="left:30px;width:19px"></span></div><div class="td" style="left:155px;width:60px;"><span style="position:absolute;left:12px;top:0">72</span><span class="bl" style="left:23px;width:24px"></span></div><div class="td" style="left:215px;width:56px;"><span class="ins"><i>국</i><i>건</i><i>고</i><i>산</i></span></div><div class="td" style="left:271px;width:66px;">2013-01-02</div><div class="td" style="left:337px;width:67px;"></div><div class="td" style="left:404px;width:65px;">2024-06-01</div><div class="td" style="left:469px;width:66px;color:#000">2025-04-22</div><div class="td" style="left:535px;width:65px;">2025-06-21</div></div><div class="tr" style="top:447.06px;"><div class="td" style="left:0px;width:35px;"><span class="st">활동</span></div><div class="td" style="left:35px;width:30px;"><span class="fr" style="background:#ff6a13">F</span></div><div class="td" style="left:65px;width:30px;"></div><div class="td" style="left:95px;width:60px;letter-spacing:-0.5px"><span style="position:absolute;left:16px;top:0">정</span><span class="bl" style="left:30px;width:19px"></span></div><div class="td" style="left:155px;width:60px;"><span style="position:absolute;left:12px;top:0">79</span><span class="bl" style="left:23px;width:24px"></span></div><div class="td" style="left:215px;width:56px;"><span class="ins"><i>국</i><i>건</i><i>고</i><i>산</i></span></div><div class="td" style="left:271px;width:66px;">2017-07-01</div><div class="td" style="left:337px;width:67px;"></div><div class="td" style="left:404px;width:65px;">2024-06-01</div><div class="td" style="left:469px;width:66px;color:#000">2025-03-28</div><div class="td" style="left:535px;width:65px;">2025-06-21</div></div><div class="tr" style="top:474.42px;"><div class="td" style="left:0px;width:35px;"><span class="st">활동</span></div><div class="td" style="left:35px;width:30px;"><span class="fr" style="background:#ff6a13">F</span></div><div class="td" style="left:65px;width:30px;"></div><div class="td" style="left:95px;width:60px;letter-spacing:-0.5px"><span style="position:absolute;left:16px;top:0">진</span><span class="bl" style="left:30px;width:19px"></span></div><div class="td" style="left:155px;width:60px;"><span style="position:absolute;left:12px;top:0">65</span><span class="bl" style="left:23px;width:24px"></span></div><div class="td" style="left:215px;width:56px;"><span class="ins"><i>국</i><i>건</i><i>고</i><i>산</i></span></div><div class="td" style="left:271px;width:66px;">2021-12-31</div><div class="td" style="left:337px;width:67px;"></div><div class="td" style="left:404px;width:65px;">2024-06-01</div><div class="td" style="left:469px;width:66px;color:#000">2025-03-20</div><div class="td" style="left:535px;width:65px;">2025-06-21</div></div><div class="tr" style="top:501.78px;"><div class="td" style="left:0px;width:35px;"><span class="st">활동</span></div><div class="td" style="left:35px;width:30px;"><span class="fr" style="background:#2fc21b">I</span></div><div class="td" style="left:65px;width:30px;"></div><div class="td" style="left:95px;width:60px;letter-spacing:-0.5px"><span style="position:absolute;left:16px;top:0">천</span><span class="bl" style="left:30px;width:19px"></span></div><div class="td" style="left:155px;width:60px;"><span style="position:absolute;left:12px;top:0">57</span><span class="bl" style="left:23px;width:24px"></span></div><div class="td" style="left:215px;width:56px;"><span class="ins"><i>건</i><i>고</i><i>산</i></span></div><div class="td" style="left:271px;width:66px;">2022-11-17</div><div class="td" style="left:337px;width:67px;"></div><div class="td" style="left:404px;width:65px;">2024-06-01</div><div class="td" style="left:469px;width:66px;color:#000">2025-03-18</div><div class="td" style="left:535px;width:65px;">2025-06-21</div></div><div class="tr" style="top:529.14px;"><div class="td" style="left:0px;width:35px;"><span class="st">활동</span></div><div class="td" style="left:35px;width:30px;"></div><div class="td" style="left:65px;width:30px;"></div><div class="td" style="left:95px;width:60px;letter-spacing:-0.5px"><span style="position:absolute;left:16px;top:0">최</span><span class="bl" style="left:30px;width:19px"></span></div><div class="td" style="left:155px;width:60px;"><span style="position:absolute;left:12px;top:0">59</span><span class="bl" style="left:23px;width:24px"></span></div><div class="td" style="left:215px;width:56px;"><span class="ins"><i>건</i><i>고</i><i>산</i></span></div><div class="td" style="left:271px;width:66px;">2022-10-14</div><div class="td" style="left:337px;width:67px;"></div><div class="td" style="left:404px;width:65px;">2024-06-01</div><div class="td" style="left:469px;width:66px;color:#000">2025-03-18</div><div class="td" style="left:535px;width:65px;">2025-06-21</div></div><div class="tr" style="top:556.50px;"><div class="td" style="left:0px;width:35px;"><span class="st">활동</span></div><div class="td" style="left:35px;width:30px;"></div><div class="td" style="left:65px;width:30px;"></div><div class="td" style="left:95px;width:60px;letter-spacing:-0.5px"><span style="position:absolute;left:16px;top:0">최</span><span class="bl" style="left:30px;width:19px"></span></div><div class="td" style="left:155px;width:60px;"><span style="position:absolute;left:12px;top:0">63</span><span class="bl" style="left:23px;width:24px"></span></div><div class="td" style="left:215px;width:56px;"><span class="ins"><i>건</i><i>고</i><i>산</i></span></div><div class="td" style="left:271px;width:66px;">2022-12-14</div><div class="td" style="left:337px;width:67px;"></div><div class="td" style="left:404px;width:65px;">2024-06-01</div><div class="td" style="left:469px;width:66px;color:#000">2025-04-23</div><div class="td" style="left:535px;width:65px;">2025-06-21</div></div><div class="tr" style="top:583.86px;"><div class="td" style="left:0px;width:35px;"><span class="st">활동</span></div><div class="td" style="left:35px;width:30px;"><span class="fr" style="background:#ff6a13">F</span></div><div class="td" style="left:65px;width:30px;"></div><div class="td" style="left:95px;width:60px;letter-spacing:-0.5px"><span style="position:absolute;left:16px;top:0">최</span><span class="bl" style="left:30px;width:19px"></span></div><div class="td" style="left:155px;width:60px;"><span style="position:absolute;left:12px;top:0">70</span><span class="bl" style="left:23px;width:24px"></span></div><div class="td" style="left:215px;width:56px;"><span class="ins"><i>건</i><i>고</i><i>산</i></span></div><div class="td" style="left:271px;width:66px;">2017-06-08</div><div class="td" style="left:337px;width:67px;"></div><div class="td" style="left:404px;width:65px;">2024-06-01</div><div class="td" style="left:469px;width:66px;color:#000">2025-03-21</div><div class="td" style="left:535px;width:65px;">2025-06-21</div></div><div class="tr" style="top:611.22px;"><div class="td" style="left:0px;width:35px;"><span class="st">활동</span></div><div class="td" style="left:35px;width:30px;"></div><div class="td" style="left:65px;width:30px;"></div><div class="td" style="left:95px;width:60px;letter-spacing:-0.5px"><span style="position:absolute;left:16px;top:0">현</span><span class="bl" style="left:30px;width:19px"></span></div><div class="td" style="left:155px;width:60px;"><span style="position:absolute;left:12px;top:0">63</span><span class="bl" style="left:23px;width:24px"></span></div><div class="td" style="left:215px;width:56px;"><span class="ins"><i>건</i><i>고</i><i>산</i></span></div><div class="td" style="left:271px;width:66px;">2017-07-06</div><div class="td" style="left:337px;width:67px;"></div><div class="td" style="left:404px;width:65px;">2024-06-01</div><div class="td" style="left:469px;width:66px;color:#000">2025-03-26</div><div class="td" style="left:535px;width:65px;">2025-06-21</div></div><div class="tr" style="top:638.58px;"><div class="td" style="left:0px;width:35px;"><span class="st">활동</span></div><div class="td" style="left:35px;width:30px;"></div><div class="td" style="left:65px;width:30px;"></div><div class="td" style="left:95px;width:60px;letter-spacing:-0.5px"><span style="position:absolute;left:16px;top:0">홍</span><span class="bl" style="left:30px;width:19px"></span></div><div class="td" style="left:155px;width:60px;"><span style="position:absolute;left:12px;top:0">55</span><span class="bl" style="left:23px;width:24px"></span></div><div class="td" style="left:215px;width:56px;"><span class="ins"><i>고</i><i>산</i></span></div><div class="td" style="left:271px;width:66px;">2023-10-01</div><div class="td" style="left:337px;width:67px;"></div><div class="td" style="left:404px;width:65px;">2024-06-01</div><div class="td" style="left:469px;width:66px;color:#000">2025-04-01</div><div class="td" style="left:535px;width:65px;">2025-06-21</div></div>
</div>
<div class="a" style="left:228px;top:198px;width:29px;height:667px;backdrop-filter:blur(4.5px);-webkit-backdrop-filter:blur(4.5px);background:rgba(255,255,255,0.15)"></div>
<div class="a" style="left:281px;top:198px;width:29px;height:667px;backdrop-filter:blur(4.5px);-webkit-backdrop-filter:blur(4.5px);background:rgba(255,255,255,0.15)"></div>
<div class="a" style="left:706px;top:198px;width:18px;height:667px;background:#fff"></div>
<div class="a" style="left:710px;top:202px;width:0;height:0;border-left:6px solid transparent;border-right:6px solid transparent;border-bottom:7px solid #888"></div>
<div class="a" style="left:712px;top:318px;width:10px;height:528px;background:#8a8a8a;border-radius:5px"></div>
<div class="a" style="left:710px;top:854px;width:0;height:0;border-left:6px solid transparent;border-right:6px solid transparent;border-top:7px solid #888"></div>
<div class="a" style="left:107px;top:865px;width:617px;height:30px;background:linear-gradient(#e8e8e8,#f4f4f4);border-top:1px solid #d0d0d0"></div>


<div class="a" style="left:732px;top:67px;width:762px;height:175px;background:#cccccc;border:1px solid #bdbdbd;border-radius:5px"></div>
<div class="a" style="left:739px;top:74px;width:110px;height:130px;background:#fff;border-radius:3px;overflow:hidden">
 <svg class="a" style="left:0;top:0" width="110" height="130" viewBox="0 0 110 130"><ellipse cx="56.5" cy="43" rx="33.5" ry="36" fill="#e6e6e6"/><path d="M3 126V100L34 91Q43 88 43 70H70Q70 88 79 91L107 100V126Z" fill="#e6e6e6"/></svg>
 <div class="a" style="left:0;top:43px;width:110px;text-align:center;font-size:13px;color:#666;letter-spacing:-0.3px">사진</div>
 <div class="a" style="left:0;top:79px;width:110px;text-align:center;font-size:12.5px;color:#777;letter-spacing:-0.5px;line-height:16px">권장해상도<br>400*480 픽셀</div>
 <div class="a" style="left:4px;top:110px;width:30px;height:16px;background:#777;color:#fff;font-size:11.5px;font-weight:bold;line-height:16px;text-align:center;border-radius:2px;letter-spacing:-0.5px">그룹</div>
</div>
<div class="a" style="left:739px;top:212px;width:113px;height:23px;background:#eeeeee;border-radius:4px"></div>
<div class="a" style="left:758px;top:214px;font-size:15.5px;font-weight:bold;color:#222;letter-spacing:-0.5px;white-space:nowrap">김기0</div>
<div class="a" style="left:811px;top:215px;font-size:13px;color:#333;white-space:nowrap">(66)</div>
<div class="a" style="left:858px;top:74px;height:161px;border-left:1px dotted #999"></div>
<div class="a" style="left:865px;top:74px;width:142px;height:130px;background:#eeeeee;border-radius:6px;overflow:hidden">
 <div class="a" style="left:0;top:0;width:142px;height:70px;background:#d9d9d9"></div>
</div>
<div class="bdg" style="left:868px;top:79px;background:#ff6a16">친족케어</div>
<div class="bdg" style="left:918px;top:79px;background:#d3d6dd;color:#c8ccd6;font-weight:normal;letter-spacing:-0.3px">RFID</div>
<div class="bdg" style="left:952px;top:79px;background:#dcdcce;color:#d4d2b8;font-weight:normal">팀장</div>
<div class="bdg" style="left:868px;top:99px;background:#2fc21b">치매교육이수</div>
<div class="bdg" style="left:868px;top:126px;background:#0635ee">요양</div>
<div class="bdg" style="left:898px;top:126px;background:#cfd2e0;color:#bfc4d8;font-weight:normal">목욕</div>
<div class="bdg" style="left:928px;top:126px;background:#cfd2e0;color:#bfc4d8;font-weight:normal">간호</div>
<div class="a" style="left:869px;top:148px;font-size:13px;color:#333;line-height:18px;letter-spacing:-0.3px;white-space:nowrap"><span style="letter-spacing:-1.2px">요양보호사</span><br><span style="letter-spacing:-1px">경력:</span> 2<span style="font-size:9px;letter-spacing:1px">ㅂㅈㄷ</span><br>590526</div>
<div class="a" style="left:865px;top:214px;width:114px;height:21px;background:#eeeeee;border-radius:4px 0 0 4px;font-size:13px;color:#222;text-align:center;line-height:21px;letter-spacing:-0.4px">010-2570-8349</div>
<div class="a" style="left:981px;top:214px;width:26px;height:21px;background:#f6f6f6;border-radius:0 4px 4px 0"><svg class="a" style="left:6px;top:5px" width="14" height="11" viewBox="0 0 14 11"><rect x="0" y="0" width="14" height="11" fill="#222"/><path d="M0.8 1.2L7 6.5 13.2 1.2M0.8 10L5 5.8M13.2 10L9 5.8" fill="none" stroke="#f6f6f6" stroke-width="1.2"/></svg></div>
<div class="a" style="left:1013px;top:74px;height:161px;border-left:1px dotted #999"></div>
<div class="a" style="left:1019px;top:78px;font-size:12px;color:#fff;font-weight:bold;letter-spacing:-0.5px">자격</div>
<div class="a" style="left:1052px;top:96px;font-size:13px;color:#333;white-space:nowrap;letter-spacing:-0.3px">요양보호사 1급 / 제2021-1000000호 / 2017-02-10</div>
<div class="a" style="left:1014px;top:124px;width:472px;border-top:1px dotted #999"></div>
<div class="a" style="left:1019px;top:128px;font-size:12px;color:#fff;font-weight:bold;letter-spacing:-0.5px">주소</div>
<div class="a" style="left:1052px;top:128px;font-size:13px;color:#333;white-space:nowrap;letter-spacing:-0.3px">(42279) 대구광역시 수성구 달구벌대로 3294 (신매동)</div>
<div class="a" style="left:1021px;top:146px;width:20px;height:18px;background:#f6f6f6;border-radius:2px"><svg class="a" style="left:4px;top:2px" width="12" height="15" viewBox="0 0 12 15"><path d="M6 14C3 10 1.2 7.5 1.2 5.2A4.8 4.8 0 0 1 10.8 5.2C10.8 7.5 9 10 6 14z" fill="none" stroke="#333" stroke-width="1.1"/><circle cx="6" cy="5.3" r="1.9" fill="none" stroke="#333" stroke-width="1.1"/></svg></div>
<div class="a" style="left:1014px;top:194px;width:472px;border-top:1px dotted #999"></div>
<div class="lbl2" style="left:1041px">입사/퇴사</div>
<div class="a" style="left:1087px;top:199px;width:27px;height:18px;background:#f6f6f6;border-radius:3px;font-size:12px;color:#333;text-align:center;line-height:18px;letter-spacing:-0.5px">이력</div>
<div class="lbl2" style="left:1173px">건강검진</div>
<div class="lbl2" style="left:1290px">보수교육</div>
<div class="lbl2" style="left:1406px">연차휴가</div>
<div class="vbox" style="left:1021px;width:114px">입사:2021-02-01</div>
<div class="vbox" style="left:1137px;width:115px">2025-02-21</div>
<div class="vbox" style="left:1254px;width:114px">2025-06-21</div>
<div class="vbox" style="left:1370px;width:114px">1.5</div>
<div class="a" style="left:1391px;top:68px;width:102px;height:33px;background:#f4f4f4;border-radius:0 4px 0 10px"></div>
<div class="ibtn" style="left:1399px"><svg width="16" height="15" viewBox="0 0 16 15"><path d="M1.5 8V2.2Q1.5 1 2.7 1H13.8Q15 1 15 2.2V11.3Q15 12.5 13.8 12.5H7.5" fill="none" stroke="#333" stroke-width="1.2"/><path d="M1.5 4.2H15" stroke="#333" stroke-width="1.1"/><path d="M1.8 12.5L5.8 8.5M3 8.5H5.8V11.3" fill="none" stroke="#333" stroke-width="1.3"/></svg></div>
<div class="ibtn" style="left:1429px"><svg width="16" height="15" viewBox="0 0 16 15"><path d="M2 13.5l0.8-3.5 8.5-8.5 2.7 2.7-8.5 8.5z M9.8 3l2.7 2.7" fill="none" stroke="#333" stroke-width="1.2"/></svg></div>
<div class="ibtn" style="left:1459px"><svg width="16" height="15" viewBox="0 0 16 15"><path d="M2 2.5h12M6 2.5V1h4v1.5" stroke="#333" stroke-width="1.5" fill="none"/><path d="M3.2 4h9.6l-0.8 10.5H4z" fill="#333"/><path d="M6 6v6.5M8 6v6.5M10 6v6.5" stroke="#f4f4f4" stroke-width="0.9"/></svg></div>


<div class="a" style="left:732px;top:248px;width:761px;height:645px;background:#fff;border:1px solid #d2d2d2;border-radius:4px"></div>
<div class="a" style="left:733px;top:249px;width:759px;height:34px;background:#e9e9e9;border-bottom:1px solid #d2d2d2;border-radius:4px 4px 0 0"></div>
<div class="rt" style="left:740px;width:36px">급여</div>
<div class="rt" style="left:781px;width:58px">방문일정</div>
<div class="rt" style="left:843px;width:59px">관리기록</div>
<div class="rt" style="left:906px;width:59px">배상책임</div>
<div class="rt" style="left:970px;width:58px;background:#fff;height:28px">수당설정</div>
<div class="rt" style="left:1033px;width:94px">사회보험/소득세</div>
<div class="rt" style="left:1132px;width:60px">기타정보</div>
<div class="rt" style="left:1196px;width:67px">서류&amp;서식</div>
<div class="rt" style="left:1266px;width:49px">파일함</div>
<div class="a" style="left:738px;top:291px;font-size:12px;font-weight:bold;color:#555;white-space:nowrap;letter-spacing:-1px">임금(수당) 산정방식-DEV</div>
<div class="a" style="left:739px;top:308px;width:734px;height:580px;border:1px solid #cfcfcf;border-radius:4px"></div>
<div class="a" style="left:750px;top:320px;width:66px;height:110px;background:#f5f5f5;border:1px solid #c8c8c8;border-radius:3px;text-align:center;font-size:12px;color:#555;line-height:16px;letter-spacing:-0.6px;padding-top:15px">도움말<br><br>임금(수당)<br>산정방식<br>선택 가이드</div>
<div class="gl" style="left:827px;top:320px">A. 임금산정방식</div>
<div class="rad" style="left:827px;top:340px"></div><div class="rl" style="left:843px;top:338px">단순시급</div>
<div class="rad on" style="left:827px;top:362px"></div><div class="rl" style="left:843px;top:360px">서비스건(시급)</div>
<div class="rad" style="left:827px;top:384px"></div><div class="rl" style="left:843px;top:382px">총액비율</div>
<div class="rad" style="left:827px;top:406px"></div><div class="rl" style="left:843px;top:404px">월급</div>
<div class="gl" style="left:1046px;top:321px">B. 포괄시급</div>
<div class="inp" style="left:1046px;top:337px;width:54px">12,614</div>
<div class="rl" style="left:1105px;top:339px;color:#555">원</div>
<div class="gl" style="left:1046px;top:370px">B. 포괄요율</div>
<div class="inp" style="left:1046px;top:386px;width:54px;background:#e9e9e9;border-color:#e0e0e0;color:#999">0.0</div>
<div class="rl" style="left:1105px;top:388px;color:#555">%</div>
<div class="gl" style="left:1158px;top:321px">C. 수당(주휴.연차) 분개방식</div>
<div class="rad" style="left:1158px;top:340px"></div><div class="rl" style="left:1174px;top:338px">기본(이지케어)</div>
<div class="rad on" style="left:1158px;top:362px"></div><div class="rl" style="left:1174px;top:360px">금액 분개</div>
<div class="rad" style="left:1158px;top:384px"></div><div class="rl" style="left:1174px;top:382px">비율 분개</div>
<div class="rad" style="left:1158px;top:406px"></div><div class="rl" style="left:1174px;top:404px">분개안함</div>
<div class="gl" style="left:1310px;top:321px">D. 수당 분개값 설정</div>
<div class="a" style="left:1308px;top:333px;width:155px;height:98px;background:#ffffdc"></div>
<div class="rl" style="left:1310px;top:340px;width:73px;text-align:right">+기본시급</div>
<div class="rl" style="left:1310px;top:362px;width:73px;text-align:right">+주휴수당</div>
<div class="rl" style="left:1310px;top:385px;width:73px;text-align:right">+연차수당</div>
<div class="rl" style="left:1300px;top:407px;width:83px;text-align:right">+식대(시간당)</div>
<div class="inp" style="left:1387px;top:337px;width:59px">10,030</div>
<div class="inp" style="left:1387px;top:359px;width:59px">2,006</div>
<div class="inp" style="left:1387px;top:382px;width:59px">578</div>
<div class="inp" style="left:1387px;top:404px;width:59px">0</div>
<div class="rl" style="left:1450px;top:339px">원</div>
<div class="rl" style="left:1450px;top:361px">원</div>
<div class="rl" style="left:1450px;top:384px">원</div>
<div class="rl" style="left:1450px;top:406px">원</div>
<div class="a" style="left:750px;top:435px;width:711px;height:0;border-top:1px solid #a0a0a0"></div>
<div class="sh" style="left:750px">고정 수당(분개 및 추가지급)</div>
<div class="sh" style="left:991px">고정 수당(추가지급)</div>
<div class="sh" style="left:1232px">고정 공제(-)</div>
<div class="lb" style="left:752px;top:463.0px;width:132px;background:#f8e5de;color:#444">기본급</div><div class="lv" style="left:942px;top:463.0px">0</div><div class="dl" style="left:750px;top:484.0px;width:230px"></div><div class="lb" style="left:752px;top:488.1px;width:132px;background:#f8e5de;color:#444">주휴수당</div><div class="lv" style="left:942px;top:488.1px">0</div><div class="dl" style="left:750px;top:509.1px;width:230px"></div><div class="lb" style="left:752px;top:513.2px;width:132px;background:#f8e5de;color:#444">연차수당</div><div class="lv" style="left:942px;top:513.2px">0</div><div class="dl" style="left:750px;top:534.2px;width:230px"></div><div class="lb" style="left:752px;top:538.3px;width:132px;background:#f8e5de;color:#444">야간근로수당</div><div class="lv" style="left:942px;top:538.3px">0</div><div class="dl" style="left:750px;top:559.3px;width:230px"></div><div class="lb" style="left:752px;top:563.4px;width:132px;background:#f8e5de;color:#444">휴일근로수당</div><div class="lv" style="left:942px;top:563.4px">0</div><div class="dl" style="left:750px;top:584.4px;width:230px"></div><div class="lb" style="left:752px;top:588.5px;width:132px;background:#f8e5de;color:#444">연장근로수당</div><div class="lv" style="left:942px;top:588.5px">0</div><div class="dl" style="left:750px;top:609.5px;width:230px"></div><div class="lb" style="left:752px;top:613.6px;width:132px;background:#f8e5de;color:#444">식대</div><div class="lv" style="left:942px;top:613.6px">0</div><div class="dl" style="left:750px;top:634.6px;width:230px"></div><div class="lb" style="left:752px;top:638.7px;width:132px;background:#f8e5de;color:#444">보전수당</div><div class="lv" style="left:942px;top:638.7px">0</div><div class="dl" style="left:750px;top:659.7px;width:230px"></div><div class="lb" style="left:752px;top:663.8px;width:132px;background:#cde49b;color:#444">자가운전</div><div class="lv" style="left:942px;top:663.8px">0</div><div class="dl" style="left:750px;top:684.8px;width:230px"></div><div class="lb" style="left:752px;top:688.9px;width:132px;background:#b6bce5;color:#777">+추가</div><div class="dl" style="left:750px;top:709.9px;width:230px"></div><div class="lb" style="left:752px;top:714.0px;width:132px;background:#dcdcdc;color:#444">계</div><div class="lv" style="left:942px;top:714.0px">0</div><div class="dl" style="left:750px;top:735.0px;width:230px"></div><div class="lb" style="left:993px;top:463.0px;width:132px;background:#f8e5de;color:#444">장기근속장려금</div><div class="lv" style="left:1183px;top:463.0px">0</div><div class="dl" style="left:991px;top:484.0px;width:230px"></div><div class="lb" style="left:993px;top:488.1px;width:132px;background:#f8e5de;color:#444">인지활동수당</div><div class="lv" style="left:1183px;top:488.1px">0</div><div class="dl" style="left:991px;top:509.1px;width:230px"></div><div class="lb" style="left:993px;top:513.2px;width:132px;background:#f8e5de;color:#444">보수교육비</div><div class="lv" style="left:1183px;top:513.2px">0</div><div class="dl" style="left:991px;top:534.2px;width:230px"></div><div class="lb" style="left:993px;top:538.3px;width:132px;background:#b6bce5;color:#777">+추가</div><div class="dl" style="left:991px;top:559.3px;width:230px"></div><div class="lb" style="left:993px;top:563.4px;width:132px;background:#dcdcdc;color:#444">계</div><div class="lv" style="left:1183px;top:563.4px">0</div><div class="dl" style="left:991px;top:584.4px;width:230px"></div><div class="lb" style="left:1234px;top:463.0px;width:132px;background:#f8e5de;color:#444">본인부담금</div><div class="lv" style="left:1424px;top:463.0px">0</div><div class="dl" style="left:1232px;top:484.0px;width:229px"></div><div class="lb" style="left:1234px;top:488.1px;width:132px;background:#cde49b;color:#444">연말정산 근로소득세</div><div class="lv" style="left:1424px;top:488.1px">0</div><div class="dl" style="left:1232px;top:509.1px;width:229px"></div><div class="lb" style="left:1234px;top:513.2px;width:132px;background:#cde49b;color:#444">연말정산 지방소득세</div><div class="lv" style="left:1424px;top:513.2px">0</div><div class="dl" style="left:1232px;top:534.2px;width:229px"></div><div class="lb" style="left:1234px;top:538.3px;width:132px;background:#b6bce5;color:#777">+추가</div><div class="dl" style="left:1232px;top:559.3px;width:229px"></div><div class="lb" style="left:1234px;top:563.4px;width:132px;background:#dcdcdc;color:#444">계</div><div class="lv" style="left:1424px;top:563.4px">0</div><div class="dl" style="left:1232px;top:584.4px;width:229px"></div><div class="bi" style="left:751px;top:610px">비</div><div class="bi" style="left:752px;top:661px">비</div>
<div class="a" style="left:1265px;top:832px;font-size:12.5px;font-weight:bold;color:#333;letter-spacing:-0.5px">급여계</div>
<div class="a" style="left:1264px;top:855px;width:147px;height:22px;background:#eeeeee;border:1px solid #cfcfcf;border-radius:3px"></div>
<div class="a" style="left:1415px;top:855px;width:46px;height:22px;background:#f6f6f6;border:1px solid #cfcfcf;border-radius:3px;font-size:12px;color:#444;line-height:20px;padding-left:20px;letter-spacing:-0.5px">저장<svg class="a" style="left:5px;top:3px" width="14" height="14" viewBox="0 0 14 14"><path d="M1 1h10l2 2v10H1z" fill="#333"/><rect x="3.5" y="1" width="6" height="4" fill="#f6f6f6"/><rect x="7" y="1.5" width="1.5" height="3" fill="#333"/></svg></div>
<div class="a" style="left:1481px;top:300px;width:10px;height:574px;background:#8a8a8a;border-radius:5px"></div>
<div class="a" style="left:1480px;top:287px;width:0;height:0;border-left:6px solid transparent;border-right:6px solid transparent;border-bottom:7px solid #888"></div>
<div class="a" style="left:1480px;top:882px;width:0;height:0;border-left:6px solid transparent;border-right:6px solid transparent;border-top:7px solid #888"></div>


<svg class="a" style="left:113px;top:874px" width="13" height="14" viewBox="0 0 13 14"><path d="M3 4.5A4.2 4.2 0 0 1 10.5 5.5M10 9.5A4.2 4.2 0 0 1 2.5 8.5" fill="none" stroke="#333" stroke-width="1.3"/><path d="M8.5 1.5L10.8 5.8 6.5 5.5z" fill="#333"/><path d="M4.5 12.5L2.2 8.2 6.5 8.5z" fill="#333"/><path d="M6.5 0.5v13" stroke="#333" stroke-width="1"/></svg>
<svg class="a" style="left:300px;top:877px" width="12" height="9" viewBox="0 0 12 9"><path d="M1 1v7" stroke="#aaa" stroke-width="1.5"/><path d="M10 1v7L3 4.5z" fill="#aaa"/></svg>
<svg class="a" style="left:320px;top:877px" width="13" height="9" viewBox="0 0 13 9"><path d="M5 1.5L1.5 4.5 5 7.5" fill="none" stroke="#aaa" stroke-width="1.2"/><path d="M12 1v7L6 4.5z" fill="#aaa"/></svg>
<div class="a" style="left:341px;top:872px;width:1px;height:18px;background:#d0d0d0"></div>
<div class="a" style="left:346px;top:873px;font-size:12.5px;color:#333;letter-spacing:-0.3px">페이지</div>
<div class="a" style="left:383px;top:873px;width:32px;height:16px;background:#fff;border-radius:3px;font-size:12px;color:#222;text-align:center;line-height:16px">1</div>
<div class="a" style="left:420px;top:873px;font-size:12.5px;color:#333">/ 1</div>
<div class="a" style="left:438px;top:872px;width:1px;height:18px;background:#d0d0d0"></div>
<svg class="a" style="left:446px;top:877px" width="13" height="9" viewBox="0 0 13 9"><path d="M8 1.5L11.5 4.5 8 7.5" fill="none" stroke="#aaa" stroke-width="1.2"/><path d="M1 1v7L7 4.5z" fill="#aaa"/></svg>
<svg class="a" style="left:470px;top:877px" width="12" height="9" viewBox="0 0 12 9"><path d="M11 1v7" stroke="#aaa" stroke-width="1.5"/><path d="M2 1v7L9 4.5z" fill="#aaa"/></svg>
<div class="a" style="left:487px;top:873px;width:50px;height:16px;background:#fff;border-radius:3px;font-size:12px;color:#222;line-height:18px;padding-left:4px">10000<svg class="a" style="left:37px;top:4px" width="10" height="8" viewBox="0 0 10 8"><path d="M1.5 1.5L5 5 8.5 1.5" fill="none" stroke="#111" stroke-width="2"/></svg></div>
<div class="a" style="left:657px;top:873px;font-size:12.5px;color:#444;letter-spacing:-0.3px">조회: 29건</div>
<div class="a" style="left:422px;top:587px;width:78px;height:24px;background:#fff;white-space:nowrap;font-size:12px;color:#333;line-height:19px;padding-left:4px;padding-left:2px;letter-spacing:-0.4px">160시간 00분</div>
<div class="a" style="left:1499px;top:60px;width:2px;height:840px;background:#555"></div>
<div class="a" style="left:1499px;top:172px;width:2px;height:8px;background:#c04070"></div><div class="a" style="left:1499px;top:192px;width:2px;height:6px;background:#c04070"></div>
<div class="a" style="left:728px;top:899px;width:760px;height:1px;background:#777"></div>

<svg class="a" style="left:0;top:0" width="1501" height="900" viewBox="0 0 1501 900">
<g stroke="#ff6a00" stroke-width="3" fill="none" stroke-linecap="round" stroke-linejoin="round">
<path d="M158 34L111.5 226"/><path d="M106 214L111.5 226.5 123 222" stroke-width="4.5"/>
<path d="M706 262L932 255"/><path d="M921 246L932.5 255.5 926 266" stroke-width="4.5"/>
<path d="M1028 282L1125 337"/><path d="M1108 336.5L1125.5 337 1122.5 323" stroke-width="4.5"/>
<path d="M1232 356L1277 342"/><path d="M1264 337.5L1277.5 342 1273 354" stroke-width="4.5"/>
</g>
</svg>
<div class="obox" style="left:100px;top:0;width:83px;height:35px;border-top-width:3px"></div>
<div class="obox" style="left:106px;top:260px;width:601px;height:32px"></div>
<div class="obox" style="left:969px;top:255px;width:60px;height:28px"></div>
<div class="obox" style="left:1149px;top:358px;width:83px;height:23px"></div>
<div class="obox" style="left:1308px;top:333px;width:155px;height:98px"></div>
<div class="circ" style="left:82px;top:25px">1</div>
<div class="circ" style="left:86px;top:241px">2</div>
<div class="circ" style="left:947px;top:237px">3</div>
<div class="circ" style="left:1126px;top:339px">4</div>
<div class="circ" style="left:1287px;top:315px">5</div>

</body></html>
